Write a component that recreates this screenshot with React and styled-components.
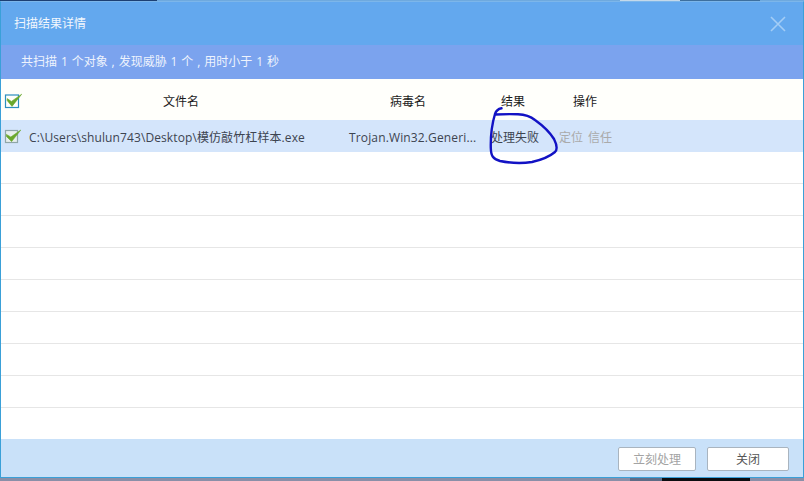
import React from "react";
import styled, { createGlobalStyle } from "styled-components";

const Global = createGlobalStyle`
  html, body { margin: 0; padding: 0; background: #8a8fa8; }
  body { width: 804px; height: 481px; overflow: hidden; }
  * { box-sizing: border-box; }
`;

const Screen = styled.div`
  width: 804px;
  height: 481px;
  display: flex;
  flex-direction: column;
  font-family: "Open Sans", "Noto Sans CJK SC", sans-serif;
  font-size: 12px;
`;

const TopStrip = styled.div`
  height: 1px;
  flex: none;
  background: linear-gradient(90deg, #1c3f73 0 157px, #6ea9de 157px 620px, #c4d9ea 620px 680px, #3d6f9e 680px 760px, #6ea9de 760px);
`;

const BottomStrip = styled.div`
  height: 3px;
  flex: none;
  background: linear-gradient(90deg, #8a8fa8 0 630px, #5f6c86 630px 662px, #0c0c10 662px 750px, #8a8fa8 750px);
`;

const Win = styled.div`
  flex: 1;
  display: flex;
  flex-direction: column;
  border: 1px solid #3aa0d8;
  border-top-color: #7cb6ea;
  position: relative;
  background: #fff;
`;

const TitleBar = styled.div`
  height: 43px;
  flex: none;
  background: #63a8ee;
  color: #f2f7fd;
  display: flex;
  align-items: center;
  justify-content: space-between;
  padding: 0 17px 0 13px;
`;

const TitleText = styled.span`
  margin-top: -2px;
`;

const SubBar = styled.div`
  height: 34px;
  flex: none;
  background: #7ba3ee;
  color: #eef3fd;
  display: flex;
  align-items: center;
  padding: 0 0 2px 20px;
  word-spacing: 0.8px;
`;

const Head = styled.div`
  height: 41px;
  flex: none;
  background: #fffffb;
  display: flex;
  align-items: center;
  color: #1a1a1a;
`;

const Row = styled.div`
  height: ${(p) => (p.$last ? 31 : 32)}px;
  flex: none;
  display: flex;
  align-items: center;
  background: ${(p) => (p.$active ? "#d4e5fb" : "#fff")};
  border-bottom: ${(p) => (p.$active || p.$last ? "none" : "1px solid #e6e6e6")};
`;

const Cell = styled.div`
  flex: none;
  width: ${(p) => p.$w}px;
  padding-top: 2px;
  text-align: ${(p) => p.$align || "center"};
  color: ${(p) => p.$color || "inherit"};
  letter-spacing: ${(p) => p.$spacing || 0}px;
  white-space: nowrap;
`;

const Check = styled.div`
  width: 28px;
  flex: none;
  padding-left: 3px;
  display: flex;
  align-items: center;
`;

const ActionLink = styled.span`
  color: #aaaaaa;
  margin-right: 5px;
`;

const Footer = styled.div`
  flex: 1;
  background: #c9e1f9;
  display: flex;
  align-items: center;
  justify-content: flex-end;
  gap: 11px;
  padding: 2px 14px 0 0;
`;

const Btn = styled.div`
  height: 24px;
  width: ${(p) => p.$w}px;
  background: #fff;
  border: 1px solid #a9b4bf;
  border-radius: 2px;
  color: ${(p) => (p.$off ? "#a3a3a3" : "#555")};
  display: flex;
  align-items: center;
  justify-content: center;
`;

const Scribble = styled.svg`
  position: absolute;
  left: 479px;
  top: 98px;
  overflow: visible;
  pointer-events: none;
`;

const CloseIcon = () => (
  <svg width="16" height="16" viewBox="0 0 16 16">
    <path d="M1 1 L15 15 M15 1 L1 15" stroke="#a3cdf6" strokeWidth="1.6" fill="none" />
  </svg>
);

const CheckIcon = ({ box }) => (
  <svg width="20" height="18" viewBox="0 0 20 18">
    <rect
      x="1.5"
      y={box ? 4 : 3.5}
      width={box ? 13 : 12}
      height={box ? 12.5 : 12}
      fill={box ? "#fffffb" : "#e8efee"}
      stroke={box ? "#2d8fc0" : "#8fa6a8"}
      strokeWidth="1.2"
    />
    <path
      d={box ? "M3.2 7.6 L7.4 10.4 L17.7 3.2 L8 15.4 L3.2 9.6 Z" : "M2.4 7.4 L6.8 10 L16.8 3 L7.6 14.6 L2.4 9.4 Z"}
      fill="#6aa82c"
      stroke="#6aa82c"
      strokeWidth="0.6"
      strokeLinejoin="round"
    />
  </svg>
);

const emptyRows = [1, 2, 3, 4, 5, 6, 7, 8, 9];

export default function App() {
  return (
    <Screen>
      <Global />
      <TopStrip />
      <Win>
        <TitleBar>
          <TitleText>扫描结果详情</TitleText>
          <CloseIcon />
        </TitleBar>
        <SubBar>共扫描 1 个对象 , 发现威胁 1 个 , 用时小于 1 秒</SubBar>
        <Head>
          <Check>
            <CheckIcon box />
          </Check>
          <Cell $w={304}>文件名</Cell>
          <Cell $w={150}>病毒名</Cell>
          <Cell $w={60}>结果</Cell>
          <Cell $w={84}>操作</Cell>
        </Head>
        <Row $active>
          <Check>
            <CheckIcon />
          </Check>
          <Cell $w={320} $align="left" $color="#3d4450" $spacing={0.1}>
            C:\Users\shulun743\Desktop\模仿敲竹杠样本.exe
          </Cell>
          <Cell $w={142} $align="left" $color="#3d4450" $spacing={0.14}>
            Trojan.Win32.Generi...
          </Cell>
          <Cell $w={68} $align="left" $color="#3d4450">
            处理失败
          </Cell>
          <Cell $w={70} $align="left">
            <ActionLink>定位</ActionLink>
            <ActionLink>信任</ActionLink>
          </Cell>
        </Row>
        {emptyRows.map((n) => (
          <Row key={n} $last={n === 9} />
        ))}
        <Footer>
          <Btn $w={78} $off>
            立刻处理
          </Btn>
          <Btn $w={82}>关闭</Btn>
        </Footer>
        <Scribble width="90" height="70" viewBox="0 0 90 70">
          <path
            d="M21.5 8.3 C18 9 16 11 15 14 C12 24 10.5 36 10.8 48 C11 56 13 59 20 61 C30 63 42 63.5 52 62 C61 60 69 57 75 52 C78 49 77 45 74 39 C69 31 62 25 55 20 C50 16 44 14.5 38 14.3 C30 14 22 14.2 15.5 14.5"
            fill="none"
            stroke="#1212c4"
            strokeWidth="2.4"
            strokeLinecap="round"
            strokeLinejoin="round"
          />
        </Scribble>
      </Win>
      <BottomStrip />
    </Screen>
  );
}
